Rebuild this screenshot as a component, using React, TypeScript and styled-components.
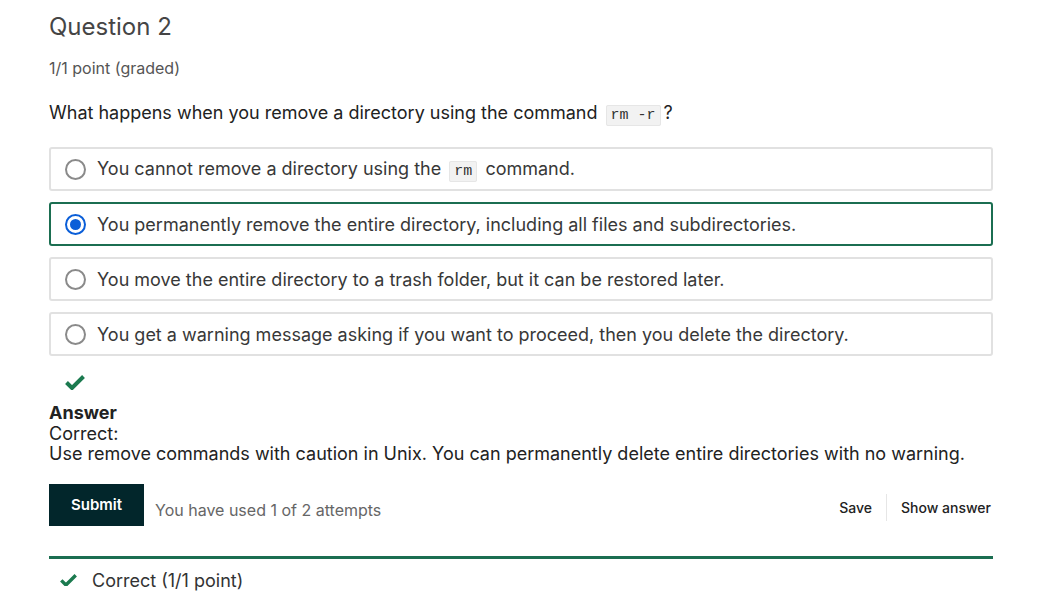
import React from "react";
import styled, { createGlobalStyle } from "styled-components";

const Global = createGlobalStyle`
  html, body { margin: 0; padding: 0; background: #fff; }
  body { font-family: Inter, "Noto Sans", sans-serif; color: #333; }
`;

const Page = styled.div`
  width: 944px;
  padding: 12px 0 0 49px;
  display: flex;
  flex-direction: column;
`;

const Title = styled.h2`
  margin: 0;
  font-size: 24px;
  font-weight: 400;
  color: #454545;
  line-height: 30px;
`;

const Points = styled.div`
  margin-top: 16px;
  font-size: 16px;
  color: #555;
  line-height: 20px;
`;

const Prompt = styled.p`
  margin: 23px 0 0;
  font-size: 18px;
  line-height: 24px;
  color: #222;
`;

const Code = styled.code`
  font-family: "Liberation Mono", "DejaVu Sans Mono", monospace;
  font-size: 15px;
  background: #f2f2f2;
  border: 1px solid #e6e6e6;
  border-radius: 2px;
  padding: 1px 4px;
  margin: 0 3px;
  color: #333;
`;

const Options = styled.div`
  margin-top: 19px;
  display: flex;
  flex-direction: column;
  gap: 11px;
`;

const Option = styled.label<{ $selected?: boolean }>`
  box-sizing: border-box;
  height: 44px;
  display: flex;
  align-items: center;
  gap: 11px;
  padding: 0 14px;
  border: 2px solid ${(p) => (p.$selected ? "#1b6e51" : "#e1e1e1")};
  border-radius: 3px;
  font-size: 18px;
  color: #383838;
`;

const Radio = styled.span<{ $checked?: boolean }>`
  box-sizing: border-box;
  width: 21px;
  height: 21px;
  border-radius: 50%;
  flex: none;
  border: 2px solid ${(p) => (p.$checked ? "#0a5ed8" : "#8a8a8a")};
  display: flex;
  align-items: center;
  justify-content: center;
  &::after {
    content: "";
    width: 11px;
    height: 11px;
    border-radius: 50%;
    background: ${(p) => (p.$checked ? "#0a5ed8" : "transparent")};
  }
`;

const CheckWrap = styled.div`
  margin: 19px 0 0 16px;
  height: 16px;
  display: flex;
`;

const AnswerBlock = styled.div`
  margin-top: 12px;
  font-size: 18px;
  line-height: 20.5px;
  color: #222;
`;

const AnswerHead = styled.div`
  font-weight: 700;
`;

const Actions = styled.div`
  margin-top: 19px;
  display: flex;
  align-items: center;
`;

const Submit = styled.button`
  width: 95px;
  height: 42px;
  border: none;
  background: #02262b;
  color: #fff;
  font-family: Inter, sans-serif;
  font-weight: 600;
  font-size: 15px;
  padding: 0;
`;

const Attempts = styled.span`
  margin: 10px 0 0 11px;
  font-size: 16px;
  color: #666;
`;

const Right = styled.div`
  margin-left: auto;
  display: flex;
  align-items: center;
  align-self: stretch;
  padding-top: 5px;
`;

const LinkBtn = styled.span`
  font-size: 14px;
  font-weight: 500;
  color: #222;
  padding: 0 2px;
`;

const Sep = styled.span`
  width: 1px;
  height: 27px;
  background: #e6e6e6;
  margin: 0 12px;
`;

const Result = styled.div`
  margin-top: 30px;
  border-top: 3px solid #1b6e51;
  display: flex;
  align-items: center;
  gap: 15px;
  padding: 11px 0 0 11px;
  font-size: 18px;
  color: #333;
`;

const Check = ({ size }: { size: number }) => (
  <svg width={size} height={size * 0.75} viewBox="0 0 20 15">
    <path d="M1.5 7.5 L7 13 L18.5 1.5" fill="none" stroke="#1b7a4f" strokeWidth="4" />
  </svg>
);

const opts = [
  <>You cannot remove a directory using the <Code>rm</Code> command.</>,
  <>You permanently remove the entire directory, including all files and subdirectories.</>,
  <>You move the entire directory to a trash folder, but it can be restored later.</>,
  <>You get a warning message asking if you want to proceed, then you delete the directory.</>,
];

export default function App() {
  return (
    <>
      <Global />
      <Page>
        <Title>Question 2</Title>
        <Points>1/1 point (graded)</Points>
        <Prompt>
          What happens when you remove a directory using the command <Code>rm -r</Code>?
        </Prompt>
        <Options>
          {opts.map((o, i) => (
            <Option key={i} $selected={i === 1}>
              <Radio $checked={i === 1} />
              <span>{o}</span>
            </Option>
          ))}
        </Options>
        <CheckWrap>
          <Check size={20} />
        </CheckWrap>
        <AnswerBlock>
          <AnswerHead>Answer</AnswerHead>
          <div>Correct:</div>
          <div>Use remove commands with caution in Unix. You can permanently delete entire directories with no warning.</div>
        </AnswerBlock>
        <Actions>
          <Submit>Submit</Submit>
          <Attempts>You have used 1 of 2 attempts</Attempts>
          <Right>
            <LinkBtn>Save</LinkBtn>
            <Sep />
            <LinkBtn>Show answer</LinkBtn>
          </Right>
        </Actions>
        <Result>
          <Check size={17} />
          <span>Correct (1/1 point)</span>
        </Result>
      </Page>
    </>
  );
}
